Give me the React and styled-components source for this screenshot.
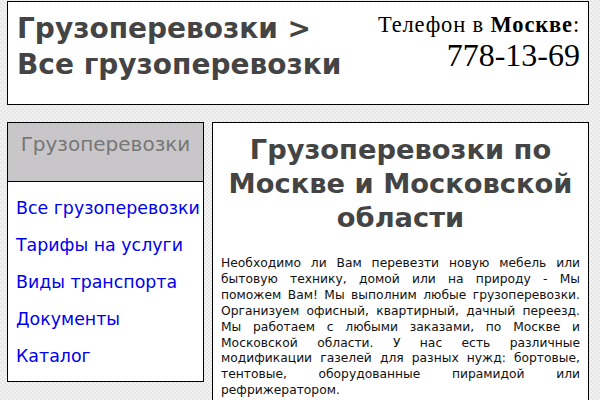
import React from 'react';
import styled, { createGlobalStyle } from 'styled-components';

const GlobalStyle = createGlobalStyle`
  html, body {
    margin: 0;
    padding: 0;
  }
  body {
    background-color: #eeeeee;
    background-image: repeating-conic-gradient(#e6e6e6 0% 25%, #f3f3f3 0% 50%);
    background-size: 4px 4px;
    font-family: "DejaVu Sans", Verdana, sans-serif;
  }
`;

const Page = styled.div`
  width: 582px;
  padding: 0 0 0 7px;
  display: flex;
  flex-direction: column;
  gap: 17px;
`;

const Header = styled.header`
  height: 104px;
  margin-top: 1px;
  box-sizing: border-box;
  background: #fff;
  border: 1px solid #000;
  display: flex;
  justify-content: space-between;
  padding: 9px 8px 0 9px;
`;

const SiteTitle = styled.h1`
  margin: 0;
  font-size: 28px;
  line-height: 36px;
  font-weight: bold;
  color: #444;
`;

const Phone = styled.div`
  font-family: "Liberation Serif", "Times New Roman", serif;
  text-align: right;
  color: #000;
`;

const PhoneLabel = styled.div`
  font-size: 22.5px;
  line-height: 26px;
  margin-top: 1px;
  letter-spacing: 0.85px;
`;

const City = styled.b`
  font-weight: bold;
`;

const PhoneNumber = styled.div`
  font-size: 32px;
  line-height: 34px;
`;

const Columns = styled.div`
  display: flex;
  align-items: flex-start;
  gap: 8px;
`;

const Sidebar = styled.nav`
  width: 197px;
  box-sizing: border-box;
  border: 1px solid #000;
  background: #fff;
`;

const SideHead = styled.div`
  height: 59px;
  box-sizing: border-box;
  background: #c8c6c8;
  border-bottom: 1px solid #000;
  color: #777;
  font-size: 20px;
  text-align: center;
  padding-top: 9px;
`;

const Menu = styled.ul`
  list-style: none;
  margin: 0;
  padding: 8px 0 6px 8px;
`;

const MenuItem = styled.li`
  font-size: 17.4px;
  line-height: 37px;
  white-space: nowrap;
`;

const MenuLink = styled.a`
  color: #0000ee;
  text-decoration: none;
`;

const Main = styled.main`
  flex: 1;
  min-height: 300px;
  box-sizing: border-box;
  border: 1px solid #000;
  background: #fff;
  padding: 10px 8px 0 8px;
`;

const MainTitle = styled.h2`
  margin: 0 0 21px 0;
  font-size: 27.3px;
  line-height: 34px;
  font-weight: bold;
  color: #444;
  text-align: center;
`;

const Text = styled.p`
  margin: 0;
  font-size: 12.3px;
  line-height: 15.9px;
  text-align: justify;
  color: #111;
`;

const links = ['Все грузоперевозки', 'Тарифы на услуги', 'Виды транспорта', 'Документы', 'Каталог'];

export default function App() {
  return (
    <>
      <GlobalStyle />
      <Page>
        <Header>
          <SiteTitle>Грузоперевозки &gt;<br />Все грузоперевозки</SiteTitle>
          <Phone>
            <PhoneLabel>Телефон в <City>Москве</City>:</PhoneLabel>
            <PhoneNumber>778-13-69</PhoneNumber>
          </Phone>
        </Header>
        <Columns>
          <Sidebar>
            <SideHead>Грузоперевозки</SideHead>
            <Menu>
              {links.map((l) => (
                <MenuItem key={l}><MenuLink href="#">{l}</MenuLink></MenuItem>
              ))}
            </Menu>
          </Sidebar>
          <Main>
            <MainTitle>Грузоперевозки по Москве и Московской области</MainTitle>
            <Text>
              Необходимо ли Вам перевезти новую мебель или бытовую технику, домой или на природу - Мы поможем Вам! Мы выполним любые грузоперевозки. Организуем офисный, квартирный, дачный переезд. Мы работаем с любыми заказами, по Москве и Московской области. У нас есть различные модификации газелей для разных нужд: бортовые, тентовые, оборудованные пирамидой или рефрижератором.
            </Text>
          </Main>
        </Columns>
      </Page>
    </>
  );
}
